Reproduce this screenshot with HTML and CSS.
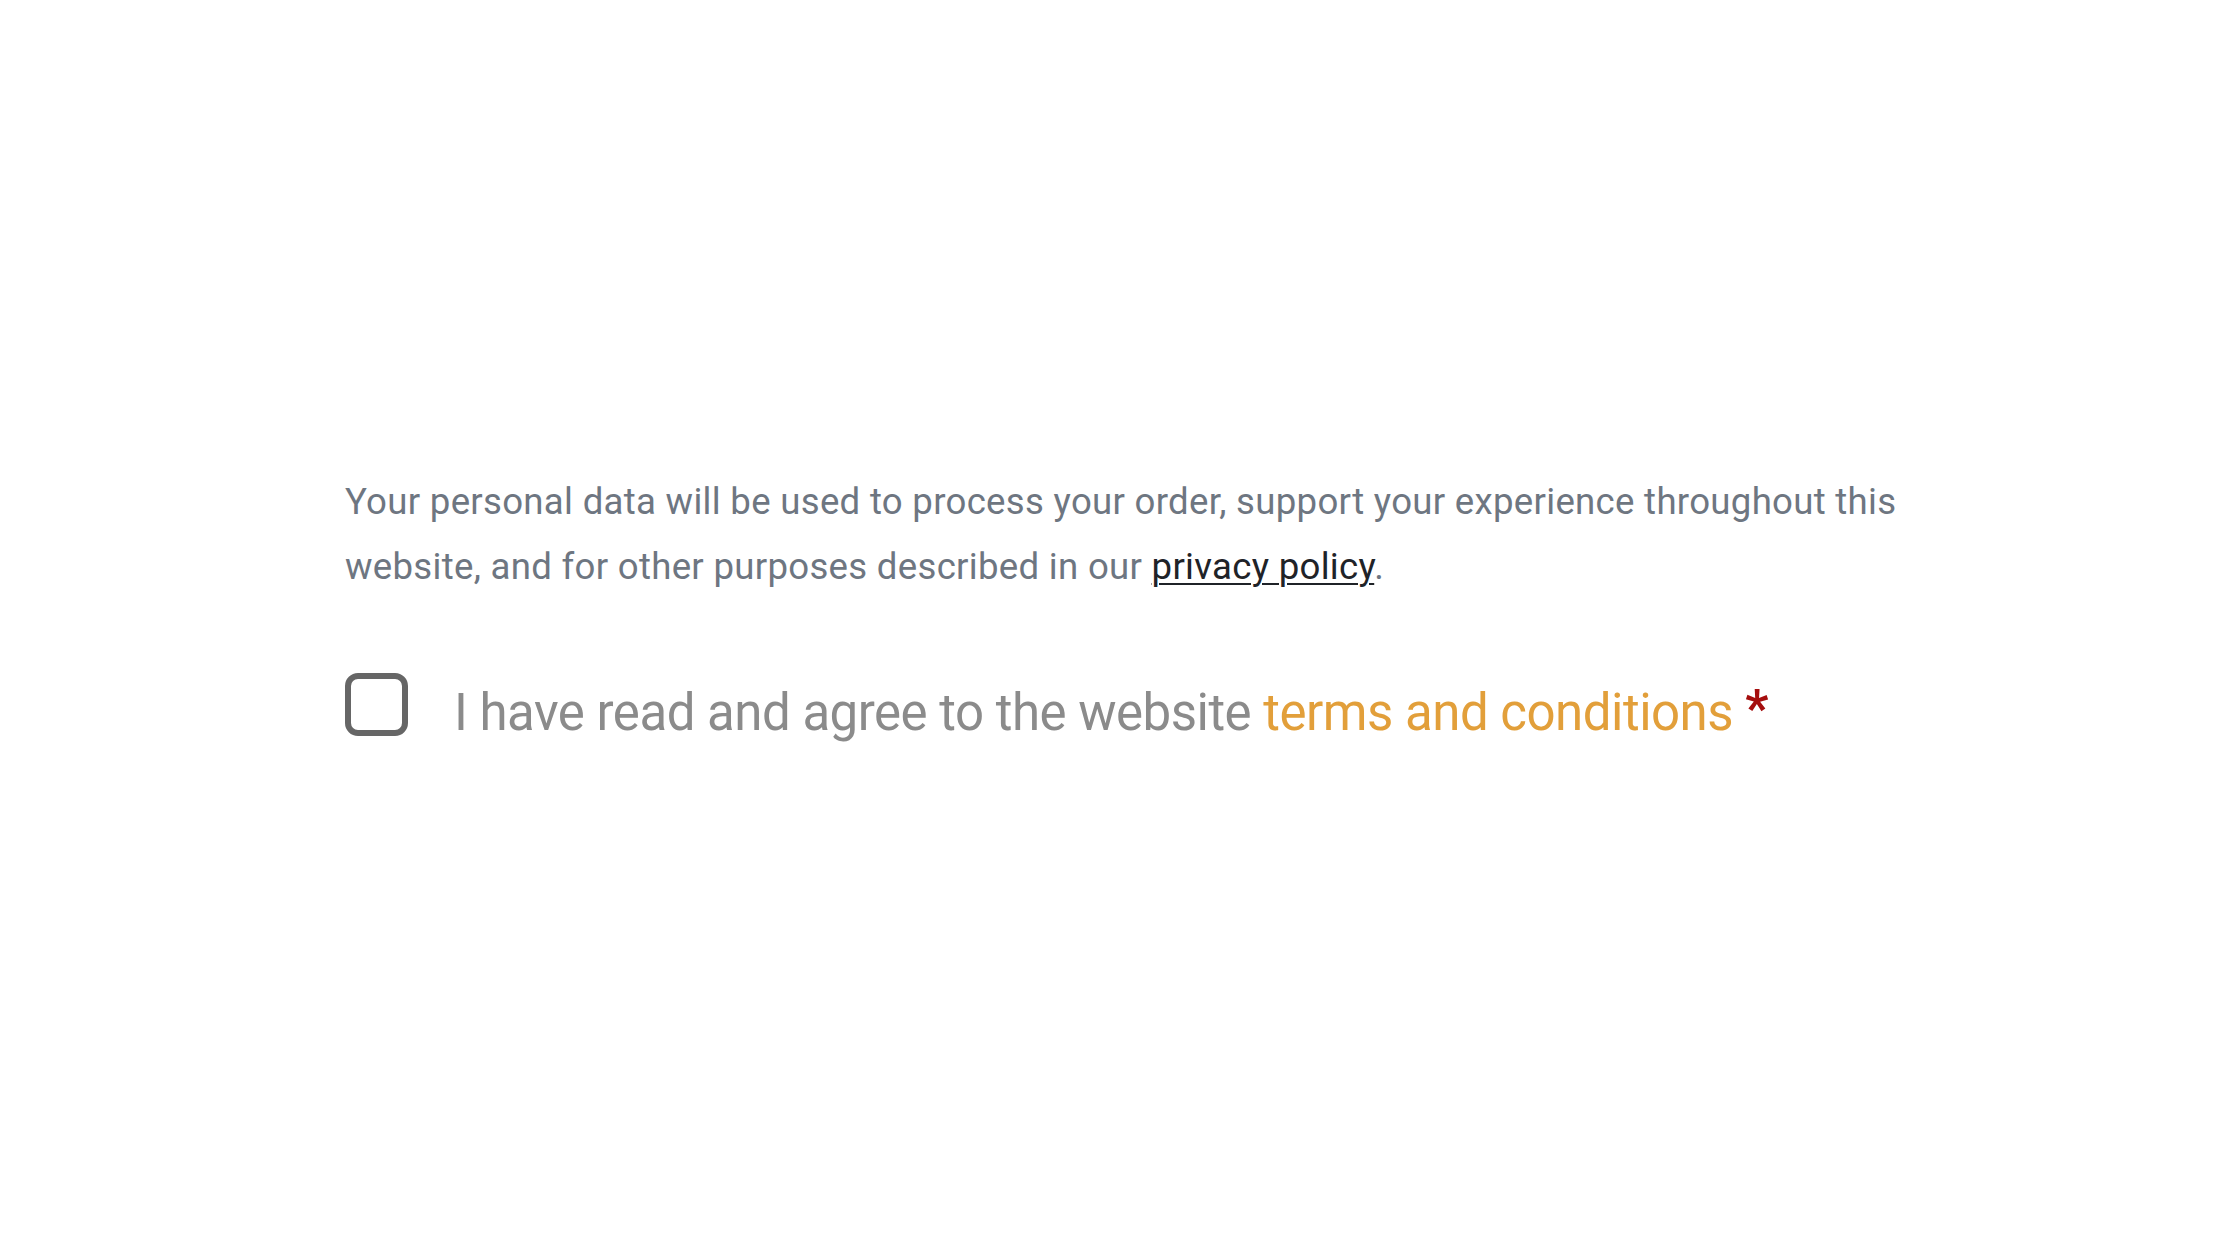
FILE: index.html
```html
<!DOCTYPE html>
<html>
<head>
<meta charset="utf-8">
<link rel="stylesheet" href="styles.css">
</head>
<body>
<div class="page">
  <p class="privacy">Your personal data will be used to process your order, support your experience throughout this website, and for other purposes described in our <a class="policy" href="#">privacy policy</a>.</p>
  <label class="terms">
    <span class="box"></span>
    <span class="label-text">I have read and agree to the website <a class="terms-link" href="#">terms and conditions</a> <span class="req">*</span></span>
  </label>
</div>
</body>
</html>
```
FILE: styles.css
```css
html, body {
  margin: 0;
  padding: 0;
  background: #ffffff;
}
.page {
  padding: 469px 0 0 345px;
  font-family: Roboto, "Liberation Sans", sans-serif;
}
.privacy {
  margin: 0;
  width: 1600px;
  font-size: 36.6px;
  line-height: 65px;
  letter-spacing: 0.3px;
  color: #6e7681;
}
.policy {
  color: #1f2328;
  text-decoration: underline;
  text-underline-offset: 4px;
  text-decoration-thickness: 2px;
}
.terms {
  display: flex;
  align-items: flex-start;
  gap: 46px;
  margin-top: 74px;
}
.box {
  flex: none;
  width: 51px;
  height: 51px;
  border: 6px solid #666666;
  border-radius: 13px;
}
.label-text {
  margin-top: 5px;
  font-size: 51px;
  line-height: 61px;
  letter-spacing: -0.5px;
  color: #8b8b8b;
}
.terms-link {
  color: #e29f3a;
  text-decoration: none;
}
.req {
  color: #a50e0e;
  font-weight: 700;
  vertical-align: 4px;
}
```
